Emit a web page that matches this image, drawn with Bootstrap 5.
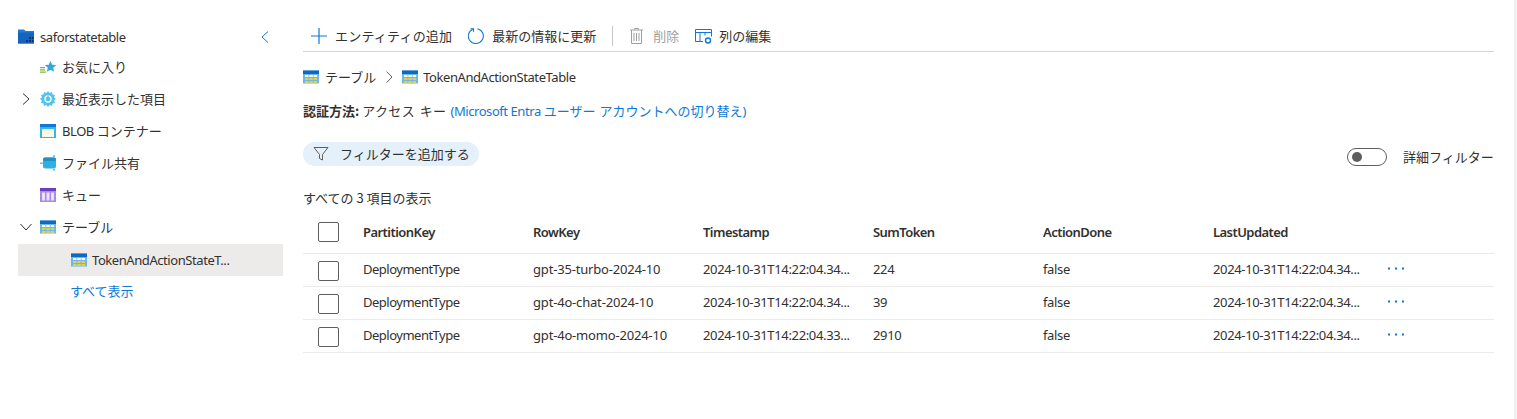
<!DOCTYPE html>
<html lang="ja">
<head>
<meta charset="utf-8">
<title>saforstatetable</title>
<link href="https://cdn.jsdelivr.net/npm/bootstrap@5.3.0/dist/css/bootstrap.min.css" rel="stylesheet">
<style>
html,body{height:419px;overflow:hidden}
body{font-family:"Noto Sans","Noto Sans CJK JP",sans-serif;font-size:13px;letter-spacing:-.43px;color:#323130;background:#fff;line-height:18px}
.jp{letter-spacing:0;font-family:"Noto Sans CJK JP","Noto Sans",sans-serif}
.shell{height:419px;border-right:3px solid #f1f1f1;padding-top:20px;width:1517px}
.side{width:303px;flex:none;padding-left:18px;padding-right:20px}
.tree-row{height:32px;display:flex;align-items:center}
.tree-top{height:32px;margin-bottom:-1px;padding-top:2px}
.chev{width:16px;margin-right:6px;flex:none;display:flex;justify-content:center}
.tree-ico{width:16px;height:16px;flex:none;margin-right:6px}
.tree-sel{background:#edebe9;padding-left:53px;margin-top:1px}
.tree-sel .tree-ico{margin-right:5px}
.tree-more{padding-left:52px;color:#0f78d4;height:30px}
.collapse-ico{margin-right:14px}
.mainpane{width:1191px;flex:none}
.tb{height:32px;border-bottom:1px solid #d6d4d2;padding-left:8px}
.tb-ico{flex:none}
.tb-gap{margin-right:8px}
.tb-add{margin-right:16px;letter-spacing:.2px}
.tb-sep{width:1px;height:20px;background:#c8c6c4;margin:0 17px 0 16px}
.tb-trash{margin-right:10px}
.tb-del{color:#a19f9d;margin-right:16px}
.tb-edit{margin-right:7px}
.crumb{height:18px;margin-top:16px}
.crumb-first{margin-right:6px}
.crumb-sep{margin:0 9px 0 10px}
.crumb-second{margin-right:5px}
.auth{margin-top:16px;height:18px}
.auth-key{word-spacing:1.200px;letter-spacing:.4px}
.auth-link{color:#0f78d4;text-decoration:none;margin-left:1px}
.auth-link .jp{word-spacing:1px}
.filter-line{margin-top:22px;height:24px}
.pill-f{height:24px;width:176px;border-radius:12px;background:#e4f0fa;padding-left:10px}
.pill-f span{margin-left:11px}
.tog{width:40px;height:18px;border:1px solid #605e5c;border-radius:9px;padding-left:4px;margin-right:16px;margin-top:6px}
.tog i{display:block;width:10px;height:10px;border-radius:50%;background:#605e5c}
.adv{margin-top:5px;width:91px;white-space:nowrap}
.count-l{margin-top:23px;height:18px}
.grid-t{table-layout:fixed;width:1191px;border-collapse:collapse;margin:7px 0 0;--bs-table-bg:transparent;--bs-table-color:#323130}
.grid-t th,.grid-t td{padding:0;border-bottom:1px solid #edebe9;vertical-align:middle;white-space:nowrap;overflow:hidden;box-shadow:none}
.grid-t th{height:39px;font-weight:600;color:#323130;padding-bottom:3px;letter-spacing:-.55px}
.grid-t td{height:33px;letter-spacing:-.35px;padding-bottom:1px}
.grid-t td.c-pk{letter-spacing:-.5px}
.grid-t td.c-rk{letter-spacing:-.18px}
.box{display:block;width:21px;height:20px;border:1px solid #605e5c;border-radius:2px;margin-left:15px}
td .box{margin-top:4px}
.dots{display:block;margin-left:5px;margin-bottom:3px;line-height:3px}
</style>
</head>
<body>
<div class="shell d-flex">
  <aside class="side">
    <div class="tree-row tree-top">
      <svg class="tree-ico" viewBox="0 0 16 16"><path d="M0 .5h6l1.500 1.500H16v12.500H0z" fill="#1c7ed6"/><path d="M0 3.500h16v11H0z" fill="#1565c0"/><path d="M8 11h2v2H8zM11 11h2v2h-2zM11 8h2v2h-2zM14 8h1.500v2H14zM14 11h1.500v2H14z" fill="#10305f"/></svg>
      <span class="flex-grow-1">saforstatetable</span>
      <svg class="collapse-ico" width="8" height="12" viewBox="0 0 8 12"><path d="M7 .5 1 6l6 5.500" fill="none" stroke="#0f78d4"/></svg>
    </div>
    <div class="tree-row">
      <span class="chev"></span>
      <svg class="tree-ico" viewBox="0 0 16 16"><path d="M0 8h5v1.200H0zM0 10.300h5v1.200H0zM0 12.600h6v1.200H0z" fill="#7fba3a"/><path d="M10.500 2l1.700 3.700 4 .4-3 2.700.9 4-3.600-2.100-3.600 2.100.9-4-3-2.700 4-.4z" fill="#2fa9dc"/></svg>
      <span class="jp">お気に入り</span>
    </div>
    <div class="tree-row">
      <span class="chev"><svg width="8" height="12" viewBox="0 0 8 12"><path d="M1 .5 7 6l-6 5.500" fill="none" stroke="#323130"/></svg></span>
      <svg class="tree-ico" viewBox="0 0 16 16"><path d="M8 0l1.600 2 2.400-.9.500 2.500 2.500.5-.9 2.400 2 1.500-2 1.600.9 2.400-2.500.5-.5 2.500-2.400-.9L8 16l-1.600-2-2.400.9-.5-2.500-2.500-.5.9-2.400-2-1.600 2-1.500-.9-2.400 2.500-.5.5-2.500 2.400.9z" fill="#50c4ee"/><circle cx="8" cy="8" r="3" fill="none" stroke="#fff" stroke-width="1.400"/><path d="M8 4.500v3" stroke="#50c4ee" stroke-width="1.400"/></svg>
      <span class="jp">最近表示した項目</span>
    </div>
    <div class="tree-row">
      <span class="chev"></span>
      <svg class="tree-ico" viewBox="0 0 16 16"><rect y="1" width="16" height="14" fill="#37b5e8"/><rect y="1" width="16" height="3" fill="#0f78d4"/><rect x="2" y="6" width="12" height="8" fill="#fdf8e8"/><rect x="2" y="6" width="12" height="2" fill="#f3ecd2"/></svg>
      <span>BLOB <span class="jp">コンテナー</span></span>
    </div>
    <div class="tree-row">
      <span class="chev"></span>
      <svg class="tree-ico" viewBox="0 0 16 16"><rect x="3" y="2.500" width="13" height="11" rx="2.500" fill="#2fb0e0"/><rect x="3" y="2.500" width="13" height="3.500" rx="1.700" fill="#1f8fc9"/><path d="M0 7.500h3v1.500H0z" fill="#5cc8ee"/><path d="M13 .2h2v2h-2zM13 13.800h2v2h-2z" fill="#5cc8ee"/></svg>
      <span class="jp">ファイル共有</span>
    </div>
    <div class="tree-row">
      <span class="chev"></span>
      <svg class="tree-ico" viewBox="0 0 16 16"><rect y="1" width="16" height="14" fill="#a98ae6"/><rect y="1" width="16" height="3" fill="#6a3fc4"/><path d="M2 5.500h3v8H2zM6.500 5.500h3v8h-3zM11 5.500h3v8h-3z" fill="#e9e1f8"/></svg>
      <span class="jp">キュー</span>
    </div>
    <div class="tree-row">
      <span class="chev"><svg width="12" height="8" viewBox="0 0 12 8"><path d="M.5 1 6 7l5.500-6" fill="none" stroke="#323130"/></svg></span>
      <svg class="tree-ico" viewBox="0 0 16 16"><use href="#tbl"/></svg>
      <span class="jp">テーブル</span>
    </div>
    <div class="tree-row tree-sel">
      <svg class="tree-ico" viewBox="0 0 16 16"><use href="#tbl"/></svg>
      <span>TokenAndActionStateT...</span>
    </div>
    <div class="tree-row tree-more jp">すべて表示</div>
  </aside>

  <main class="mainpane">
    <div class="tb d-flex align-items-center">
      <svg class="tb-ico tb-gap" width="16" height="16" viewBox="0 0 16 16"><path d="M8 0v16M0 8h16" stroke="#0f78d4" stroke-width="1.200" fill="none"/></svg>
      <span class="jp tb-add">エンティティの追加</span>
      <svg class="tb-ico tb-gap" width="16" height="16" viewBox="0 0 16 16"><path d="M9.500.7A7.500 7.500 0 1 1 4.700 1.200" fill="none" stroke="#0f78d4" stroke-width="1.100"/><path d="M2.500.8h3v3" fill="none" stroke="#0f78d4" stroke-width="1.100"/></svg>
      <span class="jp">最新の情報に更新</span>
      <span class="tb-sep"></span>
      <svg class="tb-ico tb-trash" width="13" height="16" viewBox="0 0 13 16"><path d="M4.500 1.500v-1h4v1M0 2h13M1.500 2v13.500h10V2M4 5v8M6.500 5v8M9 5v8" fill="none" stroke="#a19f9d"/></svg>
      <span class="jp tb-del">削除</span>
      <svg class="tb-ico tb-edit" width="17" height="16" viewBox="0 0 17 16"><path d="M8 13.500H.5v-12h16v7M.5 4.500h16M5 4.500v9M10 4.500v3" fill="none" stroke="#0f78d4"/><circle cx="13" cy="12.500" r="2.500" fill="none" stroke="#0f78d4" stroke-width="1.400"/></svg>
      <span class="jp">列の編集</span>
    </div>

    <div class="crumb d-flex align-items-center">
      <svg class="tree-ico crumb-first" viewBox="0 0 16 16"><use href="#tbl"/></svg>
      <span class="jp">テーブル</span>
      <svg class="crumb-sep" width="7" height="12" viewBox="0 0 7 12"><path d="M.7.500 6 6l-5.300 5.500" fill="none" stroke="#605e5c"/></svg>
      <svg class="tree-ico crumb-second" viewBox="0 0 16 16"><use href="#tbl"/></svg>
      <span>TokenAndActionStateTable</span>
    </div>

    <div class="auth">
      <span class="jp fw-semibold">認証方法:</span>
      <span class="jp auth-key">アクセス キー</span>
      <a class="auth-link" href="#">(Microsoft Entra <span class="jp">ユーザー アカウントへの切り替え</span>)</a>
    </div>

    <div class="filter-line d-flex justify-content-between">
      <div class="pill-f d-flex align-items-center">
        <svg width="16" height="16" viewBox="0 0 16 16"><path d="M1 1.500h14L9.500 8.500v5.500l-3-1.500v-4z" fill="none" stroke="#605e5c"/></svg>
        <span class="jp">フィルターを追加する</span>
      </div>
      <div class="d-flex align-items-center">
        <div class="tog d-flex align-items-center"><i></i></div>
        <span class="jp adv">詳細フィルター</span>
      </div>
    </div>

    <div class="count-l jp">すべての 3 項目の表示</div>

    <table class="table grid-t">
      <colgroup><col style="width:60px"><col style="width:170px"><col style="width:170px"><col style="width:170px"><col style="width:170px"><col style="width:170px"><col style="width:170px"><col></colgroup>
      <thead><tr><th><span class="box"></span></th><th>PartitionKey</th><th>RowKey</th><th>Timestamp</th><th>SumToken</th><th>ActionDone</th><th>LastUpdated</th><th></th></tr></thead>
      <tbody>
        <tr><td><span class="box"></span></td><td class="c-pk">DeploymentType</td><td class="c-rk">gpt-35-turbo-2024-10</td><td>2024-10-31T14:22:04.34...</td><td>224</td><td>false</td><td>2024-10-31T14:22:04.34...</td><td><span class="dots"><svg width="16" height="3" viewBox="0 0 16 3"><use href="#dots"/></svg></span></td></tr>
        <tr><td><span class="box"></span></td><td class="c-pk">DeploymentType</td><td class="c-rk">gpt-4o-chat-2024-10</td><td>2024-10-31T14:22:04.34...</td><td>39</td><td>false</td><td>2024-10-31T14:22:04.34...</td><td><span class="dots"><svg width="16" height="3" viewBox="0 0 16 3"><use href="#dots"/></svg></span></td></tr>
        <tr><td><span class="box"></span></td><td class="c-pk">DeploymentType</td><td class="c-rk">gpt-4o-momo-2024-10</td><td>2024-10-31T14:22:04.33...</td><td>2910</td><td>false</td><td>2024-10-31T14:22:04.34...</td><td><span class="dots"><svg width="16" height="3" viewBox="0 0 16 3"><use href="#dots"/></svg></span></td></tr>
      </tbody>
    </table>
  </main>
</div>
<svg width="0" height="0" class="position-absolute"><defs>
  <g id="tbl"><rect y="1.500" width="16" height="13" fill="#6ab8ea"/><rect y="1.500" width="16" height="3.500" fill="#0f68c4"/><path d="M2 6h3.500v2H2zM6.300 6h3.500v2H6.300zM10.600 6h3.500v2h-3.500z" fill="#fff"/><path d="M2 9h3.500v2H2zM6.300 9h3.500v2H6.300zM10.600 9h3.500v2h-3.500zM2 12h3.500v2H2zM6.300 12h3.500v2H6.300zM10.600 12h3.500v2h-3.500z" fill="#e4cf54"/></g>
  <g id="dots"><rect x="0" y="0.500" width="2" height="2" fill="#0f78d4"/><rect x="7" y="0.500" width="2" height="2" fill="#0f78d4"/><rect x="14" y="0.500" width="2" height="2" fill="#0f78d4"/></g>
</defs></svg>
<script src="https://cdn.jsdelivr.net/npm/bootstrap@5.3.0/dist/js/bootstrap.bundle.min.js"></script>
</body>
</html>
